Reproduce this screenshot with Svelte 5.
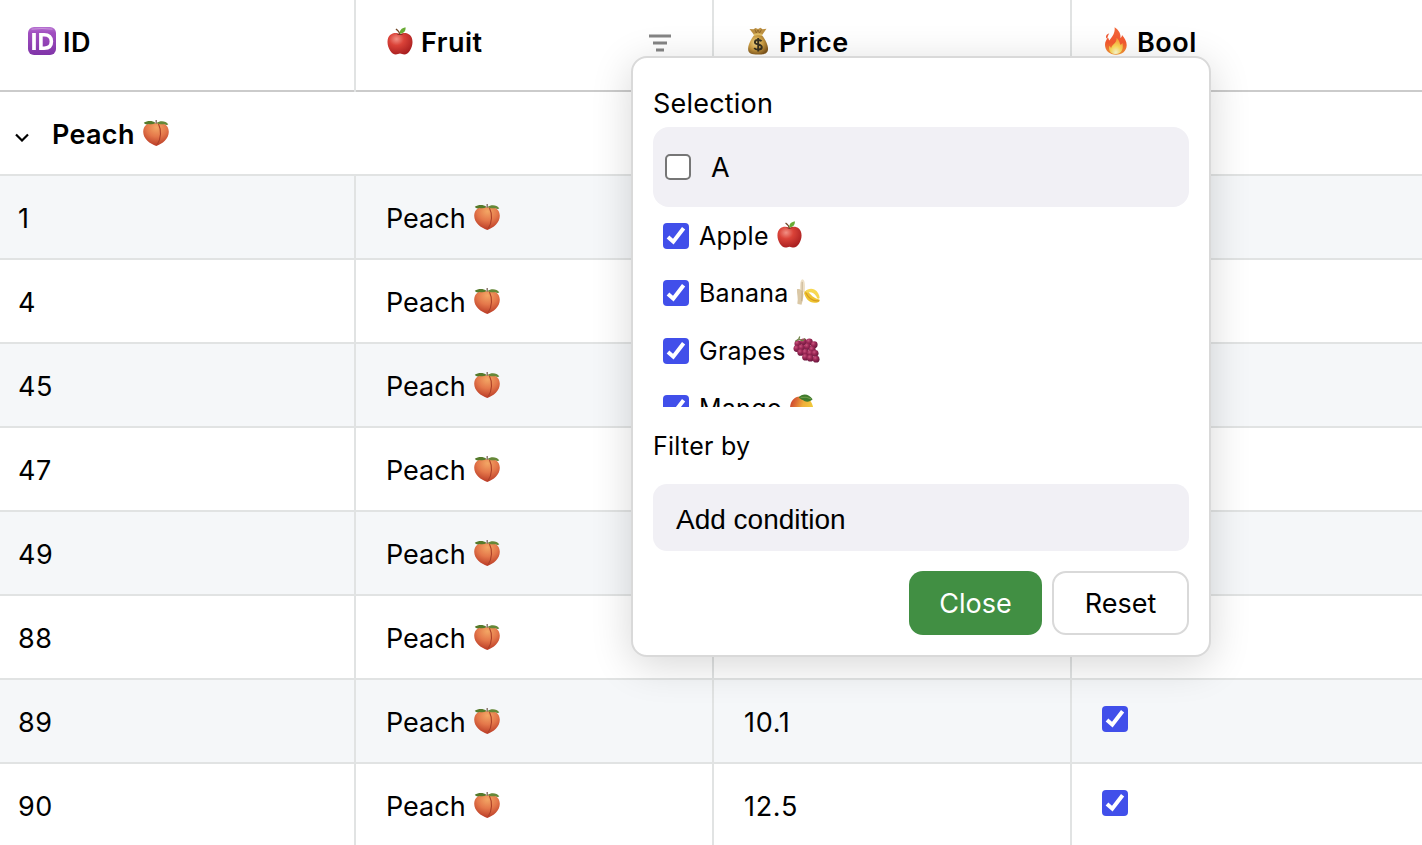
<script>
  const rows = [
    { id: 1 }, { id: 4 }, { id: 45 }, { id: 47 }, { id: 49 }, { id: 88 },
    { id: 89, price: '10.1', bool: true },
    { id: 90, price: '12.5', bool: true }
  ];
  const options = [
    { name: 'Apple', icon: 'apple' },
    { name: 'Banana', icon: 'banana' },
    { name: 'Grapes', icon: 'grapes' },
    { name: 'Mango', icon: 'mango' }
  ];
  const berries = [
    [5, 8], [11, 6], [17, 6], [22, 9], [4, 13], [9, 12], [15, 11], [20, 14],
    [8, 17], [13, 17], [18, 18], [23, 18], [13, 22], [18, 23], [24, 24]
  ];
</script>

<svg class="defs" width="0" height="0" aria-hidden="true">
  <defs>
    <radialGradient id="gPeach" cx=".52" cy=".2" r=".8"><stop offset="0" stop-color="#f3a765" /><stop offset=".5" stop-color="#e4774a" /><stop offset="1" stop-color="#b93a26" /></radialGradient>
    <radialGradient id="gApple" cx=".36" cy=".28" r=".75"><stop offset="0" stop-color="#f29084" /><stop offset=".4" stop-color="#da4238" /><stop offset="1" stop-color="#a91f20" /></radialGradient>
    <linearGradient id="gId" x2="0" y2="1"><stop offset="0" stop-color="#b56fd0" /><stop offset=".2" stop-color="#a14fc0" /><stop offset="1" stop-color="#8034a8" /></linearGradient>
    <linearGradient id="gFire" x2="0" y2="1"><stop offset="0" stop-color="#f2683a" /><stop offset=".55" stop-color="#f4582f" /><stop offset="1" stop-color="#f59a35" /></linearGradient>
    <radialGradient id="gCore" cx=".5" cy=".9" r=".8"><stop offset="0" stop-color="#fffbd0" /><stop offset=".5" stop-color="#fcd95a" /><stop offset="1" stop-color="#f8a23a" /></radialGradient>
    <radialGradient id="gBag" cx=".4" cy=".4" r=".65"><stop offset="0" stop-color="#f3d98a" /><stop offset=".55" stop-color="#c99a41" /><stop offset="1" stop-color="#80571d" /></radialGradient>
    <linearGradient id="gMango" x2="1" y2=".35"><stop offset="0" stop-color="#c4382c" /><stop offset=".3" stop-color="#dc6a35" /><stop offset=".6" stop-color="#f0ae3a" /><stop offset="1" stop-color="#f0cb3c" /></linearGradient>
    <radialGradient id="gBerry" cx=".35" cy=".3" r=".75"><stop offset="0" stop-color="#c9557f" /><stop offset=".4" stop-color="#a02a58" /><stop offset="1" stop-color="#64153a" /></radialGradient>
  </defs>
</svg>

{#snippet emoji(name)}
  <svg class="emoji" viewBox="0 0 28 28" aria-hidden="true">
    {#if name === 'peach'}
      <path d="M14 4.200C8.500 2.400 1.200 5 1.200 12.800C1.200 20 8 24.800 14.300 27C20.500 24.800 26.800 20 26.800 12.800C26.800 5 19.500 2.400 14 4.200Z" fill="url(#gPeach)" />
      <path d="M16.500 5C19.500 11 19.200 19.500 15.200 25.500" fill="none" stroke="#ad4028" stroke-width="1.100" />
      <path d="M13.500 4C10.500 1.500 5.500 1.500 1.800 3.800C3 5.700 5.200 5.700 6.500 4.900C9 5.400 11.500 5.200 13.500 4Z" fill="#557a2b" />
      <path d="M14.500 4C18 1.500 24 1.700 26.300 5.600C24.500 6.500 23.400 5.800 22.300 5C19.500 5.500 16.500 5.100 14.500 4Z" fill="#668838" />
      <path d="M14.200 4.700V1" stroke="#7d655a" stroke-width="1.300" />
    {:else if name === 'apple'}
      <path d="M14 7.200C9.500 4.600 1.500 6.200 1.500 15C1.500 21 5.600 27.500 9.800 27.500C11.600 27.500 12.500 26.600 14 26.600S16.500 27.500 18.300 27.500C22.500 27.500 26.500 21 26.500 15C26.500 6.200 18.500 4.600 14 7.200Z" fill="url(#gApple)" />
      <path d="M10 6.400Q14 9.500 18 6.400Q14 7.800 10 6.400" fill="#861f1c" />
      <path d="M14 8C13.600 5.600 12.300 3.500 9.900 2" fill="none" stroke="#704526" stroke-width="1.300" />
      <path d="M14 6.700C13.300 3.600 15.300 1.200 19.500.3C20 3.700 17.900 6.500 14 6.700Z" fill="#69ab35" />
    {:else if name === 'id'}
      <rect x="0" y="0" width="28" height="28" rx="6" fill="url(#gId)" />
      <path d="M3.500 2.200Q14 .8 24.500 2.200" fill="none" stroke="#d6a9e4" stroke-width="1" opacity=".7" />
      <path d="M6 6V23" stroke="#fff" stroke-width="3.700" />
      <path d="M12.900 7.800H16.200C21 7.800 23.400 10.200 23.400 14.500S21 21.200 16.200 21.200H12.900Z" fill="none" stroke="#fff" stroke-width="3.600" />
    {:else if name === 'fire'}
      <path d="M12.600.3C17.500 3.500 19 7.600 18.400 11C19.800 10 20 8.700 20 8C22.500 11 24.700 14.200 24.700 18C24.700 24 20 27.800 14.100 27.800C7.500 27.800 3 23.500 3 17.800C3 14.700 4.700 12.500 5.800 10.300C6.600 11.400 7 12.600 7.100 13.600C10.200 10.300 13.400 5.900 12.600.3Z" fill="url(#gFire)" />
      <path d="M4.300 8.500C3.700 10 4 10.900 4.800 11.500C6.100 10 5.800 8 7.300 6.500C5.700 6.700 4.900 7.400 4.300 8.500Z" fill="#f05a35" />
      <path d="M14.600 11C18.400 14 17.300 17 18.600 17.800C19.600 17.600 20.100 16.700 20.300 15.800C22 21.500 19.700 27.100 14 27.100C8.700 27.100 6 23.500 7.300 18.700C8.300 19.600 8.800 20.500 9.100 21.200C9.800 17.500 14.700 16.500 14.600 11Z" fill="url(#gCore)" />
    {:else if name === 'money'}
      <path d="M10.300 8C7 12 4.100 17.700 4.100 22C4.100 26.500 7.500 27.600 14 27.600S24 26.500 24 22C24 17.700 21 12 17.700 8Z" fill="url(#gBag)" />
      <path d="M5.500 2L9.500 2.300L11.500 1L14 2L16.500.8L18.500 2.200L22.500 1.700L18.500 7.500H9.800Z" fill="#bd9143" />
      <path d="M11 2.500L12.200 6L14 3L15.500 6L17.500 2.500" fill="none" stroke="#8d6427" stroke-width=".9" />
      <path d="M9.800 8Q14 6.600 18.200 8" fill="none" stroke="#e0bd64" stroke-width="2" />
      <path d="M17.500 14.200C16.500 12.700 11 12.200 10.900 15.200C10.800 18.200 17.900 16.500 17.800 20.100C17.700 23.300 12 23.300 10.200 21M14.200 11V24.500" fill="none" stroke="#36301f" stroke-width="1.900" />
    {:else if name === 'banana'}
      <path d="M8 13C9.500 21.500 15.500 26.500 23 24C24.700 23.200 25 22 24.200 21.200C18.500 20.500 15 16 11.500 12Z" fill="#efc42e" />
      <path d="M9.500 13C11.500 10.300 16 9.300 19 11C22.500 12.800 24.300 16.500 24.500 19.700C23.200 21.200 22 20.500 21 17.800C18.500 13.800 15 13 11.500 14.300Z" fill="#f7d852" />
      <path d="M10 14C13.300 20.500 18 23.500 24 22.500" fill="none" stroke="#d69b25" stroke-width="1.200" />
      <path d="M4.500 13C3.900 7.500 4 1 6.700.3C9.700 1 9.500 8 9 14.300Z" fill="#eee0c6" />
      <path d="M1 10.500C4 10 7.500 12 7.700 16C7.500 20 6.900 23 5.700 26.700C4 26 1.700 26.300 1.400 25.300C2.600 20 .7 15 1 10.500Z" fill="#dac8a6" />
      <path d="M6.400 3V14L6 23" fill="none" stroke="#b9a27f" stroke-width=".8" />
    {:else if name === 'grapes'}
      {#each berries as [x, y]}<circle cx={x} cy={y} r="3.500" fill="url(#gBerry)" />{/each}
      <path d="M10 5L6 3L2.500 5.500M6 3L7 .5M10 5L12.500 2.500" fill="none" stroke="#6d8145" stroke-width="1.300" />
    {:else}
      <path d="M1.300 17C0 9 5 2.500 11 2.500C20 2 26 9 25 17.500C24 25 18 28 12 26.500C6.500 25.500 2.500 21 1.300 17Z" fill="url(#gMango)" />
      <path d="M10 3.500C13.500-.8 20.500-.9 24.500 5.500C22 8.500 17 9 14.500 6.300C12.700 5.700 11.500 4.700 10 3.500Z" fill="#3f7b2c" />
      <path d="M12 3.500Q18 2.500 23 5" fill="none" stroke="#83a854" stroke-width=".8" />
    {/if}
  </svg>
{/snippet}

{#snippet check(on)}
  <span class="check" class:on role="checkbox" aria-checked={on}>
    {#if on}
      <svg viewBox="0 0 26 26"><path d="M5 14L10.300 18.700L20.600 5.300" fill="none" stroke="#fff" stroke-width="4" /></svg>
    {/if}
  </span>
{/snippet}

<main>
  <div class="row head">
    <div class="cell first">{@render emoji('id')}<b>ID</b></div>
    <div class="cell">{@render emoji('apple')}<b>Fruit</b>
      <svg class="funnel" viewBox="0 0 22 18"><path d="M0 2H22M4 9H18M7 16H15" stroke="#858585" stroke-width="2.800" /></svg>
    </div>
    <div class="cell">{@render emoji('money')}<b>Price</b></div>
    <div class="cell last">{@render emoji('fire')}<b>Bool</b></div>
  </div>
  <div class="group">
    <svg class="chevron" viewBox="0 0 14 9"><path d="M1 1.500L7 7.500L13 1.500" fill="none" stroke="#000" stroke-width="2.200" /></svg>
    <b>Peach</b>{@render emoji('peach')}
  </div>
  {#each rows as row, i}
    <div class="row data" class:alt={i % 2 === 0}>
      <div class="cell number">{row.id}</div>
      <div class="cell"><span>Peach</span>{@render emoji('peach')}</div>
      <div class="cell price">{row.price ?? ''}</div>
      <div class="cell last">{#if row.bool}{@render check(true)}{/if}</div>
    </div>
  {/each}

  <section class="popup">
    <div class="title">Selection</div>
    <div class="all">{@render check(false)}<span>A</span></div>
    <div class="options">
      {#each options as o}
        <div class="option">{@render check(true)}<span>{o.name}</span>{@render emoji(o.icon)}</div>
      {/each}
    </div>
    <div class="filter">Filter by</div>
    <div class="condition">Add condition</div>
    <div class="actions"><button class="close">Close</button><button class="reset">Reset</button></div>
  </section>
</main>

<style>
  :global(body) { margin: 0; overflow: hidden; }
  * { box-sizing: border-box; }
  .defs { position: absolute; }
  main { position: relative; width: 1422px; height: 845px; overflow: hidden; background: #fff; color: #000; font: 27px/34px Inter, sans-serif; }
  b { font-weight: 600; letter-spacing: .5px; }
  .emoji { width: 28px; height: 28px; flex: none; display: block; }
  .row { display: grid; grid-template-columns: 356px 358px 358px 350px; height: 84px; border-bottom: 2px solid #e1e3e3; }
  .cell { display: flex; align-items: center; border-right: 2px solid #e1e3e3; padding: 4px 0 0 30px; }
  .cell.last { border-right: 0; }
  .head { height: 92px; border-bottom-color: #cbcbcb; }
  .head .cell { padding-top: 0; padding-bottom: 6px; gap: 7px; margin-bottom: -2px; }
  .head .emoji { margin-top: -4px; }
  .head .first { padding-left: 28px; }
  .funnel { width: 22px; height: 18px; margin: 0 41px 0 auto; }
  .group { display: flex; align-items: center; height: 84px; border-bottom: 2px solid #e1e3e3; padding: 4px 0 0 15px; }
  .group b { letter-spacing: .3px; }
  .chevron { width: 14px; height: 9px; margin: 4px 23px 0 0; }
  .group .emoji { margin: -4px 0 0 7px; }
  .alt { background: #f5f7f9; }
  .number { padding-left: 18px; letter-spacing: .6px; }
  .price { letter-spacing: .7px; }
  .data .emoji { margin: -4px 0 0 7px; width: 28px; height: 28px; }
  .check { display: block; flex: none; width: 26px; height: 26px; border: 2px solid #767676; border-radius: 5px; background: #fff; }
  .check.on { border: 0; border-radius: 4px; background: #414fea; }
  .check svg { display: block; width: 26px; height: 26px; }
  .data .check { margin-top: -8px; }
  .popup { position: absolute; left: 631px; top: 56px; width: 580px; height: 601px; border: 2px solid #d9d9d9; border-radius: 16px; padding: 28px 20px 20px; background: #fff; box-shadow: 0 8px 40px rgba(0, 0, 0, .16); }
  .title { height: 41px; padding-top: 1px; font-size: 27px; letter-spacing: .2px; }
  .all { display: flex; align-items: center; gap: 20px; height: 80px; border-radius: 16px; padding-left: 12px; background: #f1f0f5; }
  .all span:last-child { padding-top: 2px; }
  .options { height: 200px; overflow: hidden; padding: 0 10px; font-size: 25px; letter-spacing: .25px; }
  .option { display: flex; align-items: center; height: 57.500px; gap: 10px; }
  .option .emoji { margin: -2px 0 0 -3px; width: 27px; height: 27px; }
  .filter { height: 77px; padding-top: 22px; font-size: 25px; letter-spacing: .25px; }
  .condition { height: 67px; border-radius: 14px; padding: 19px 23px 0; background: #f1f0f5; font: 28px/34px "Liberation Sans", Arial, sans-serif; }
  .actions { display: flex; justify-content: flex-end; gap: 10px; margin-top: 20px; }
  button { height: 64px; padding: 1px 0 0; border: 2px solid #d9d9d9; border-radius: 14px; background: #fff; color: #000; font: 27px/34px Inter, sans-serif; }
  .close { width: 133px; color: #fff; border: 0; background: #418f43; }
  .reset { width: 137px; }
</style>
